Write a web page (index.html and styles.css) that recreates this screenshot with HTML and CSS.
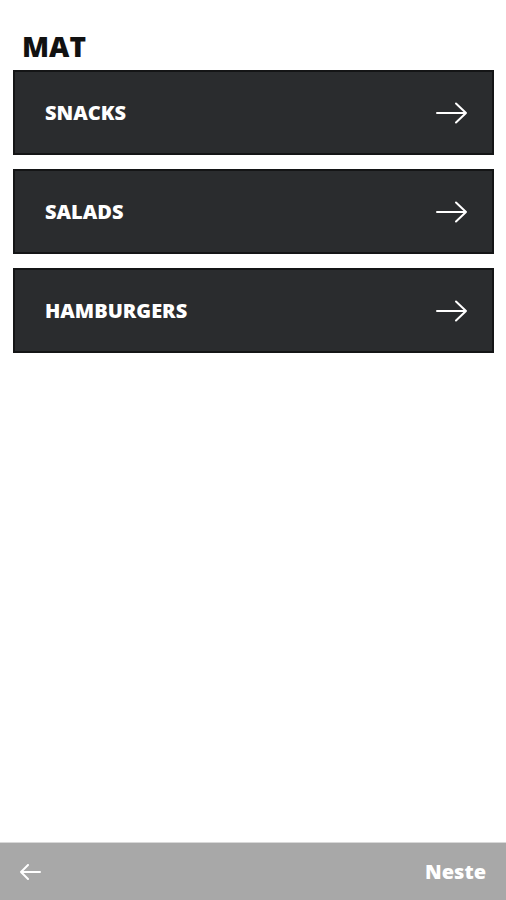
FILE: index.html
```html
<!DOCTYPE html>
<html>
<head>
<meta charset="utf-8">
<link rel="stylesheet" href="styles.css">
</head>
<body>
<div class="page">
  <main class="content">
    <h1 class="title">MAT</h1>
    <div class="list">
      <a class="card"><span class="label">SNACKS</span>
        <svg class="arrow" viewBox="0 0 32 22" width="32" height="22"><path d="M1 11H30M20 1.5L30 11L20 20.5" fill="none" stroke="#fff" stroke-width="2" stroke-linecap="round" stroke-linejoin="round"/></svg></a>
      <a class="card"><span class="label">SALADS</span>
        <svg class="arrow" viewBox="0 0 32 22" width="32" height="22"><path d="M1 11H30M20 1.5L30 11L20 20.5" fill="none" stroke="#fff" stroke-width="2" stroke-linecap="round" stroke-linejoin="round"/></svg></a>
      <a class="card"><span class="label">HAMBURGERS</span>
        <svg class="arrow" viewBox="0 0 32 22" width="32" height="22"><path d="M1 11H30M20 1.5L30 11L20 20.5" fill="none" stroke="#fff" stroke-width="2" stroke-linecap="round" stroke-linejoin="round"/></svg></a>
    </div>
  </main>
  <footer class="bar">
    <svg class="back" viewBox="0 0 22 16" width="22" height="16"><path d="M21 8H2M9 1L2 8L9 15" fill="none" stroke="#fff" stroke-width="2" stroke-linecap="round" stroke-linejoin="round"/></svg>
    <span class="next">Neste</span>
  </footer>
</div>
</body>
</html>
```
FILE: styles.css
```css
html, body {
  margin: 0;
  padding: 0;
  background: #fff;
}
.page {
  width: 506px;
  height: 900px;
  display: flex;
  flex-direction: column;
  font-family: "Open Sans", "DejaVu Sans", sans-serif;
}
.content {
  flex: 1;
  padding: 27px 12px 0 13px;
}
.title {
  margin: 0 0 5px 9px;
  font-size: 28px;
  font-weight: 800;
  line-height: 38px;
  color: #111;
}
.list {
  display: flex;
  flex-direction: column;
  gap: 14px;
}
.card {
  height: 85px;
  box-sizing: border-box;
  background: #2a2c2e;
  border: 2px solid #141516;
  display: flex;
  align-items: center;
  justify-content: space-between;
  padding: 0 24px 0 30px;
}
.label {
  color: #fff;
  font-size: 20px;
  font-weight: 800;
  letter-spacing: 0;
}
.arrow {
  display: block;
}
.bar {
  height: 57px;
  background: #a8a8a8;
  border-top: 1px solid #d8d8d8;
  display: flex;
  align-items: center;
  justify-content: space-between;
  padding: 0 20px 0 19px;
}
.back {
  display: block;
}
.next {
  color: #fff;
  font-size: 20px;
  font-weight: 800;
}
```
